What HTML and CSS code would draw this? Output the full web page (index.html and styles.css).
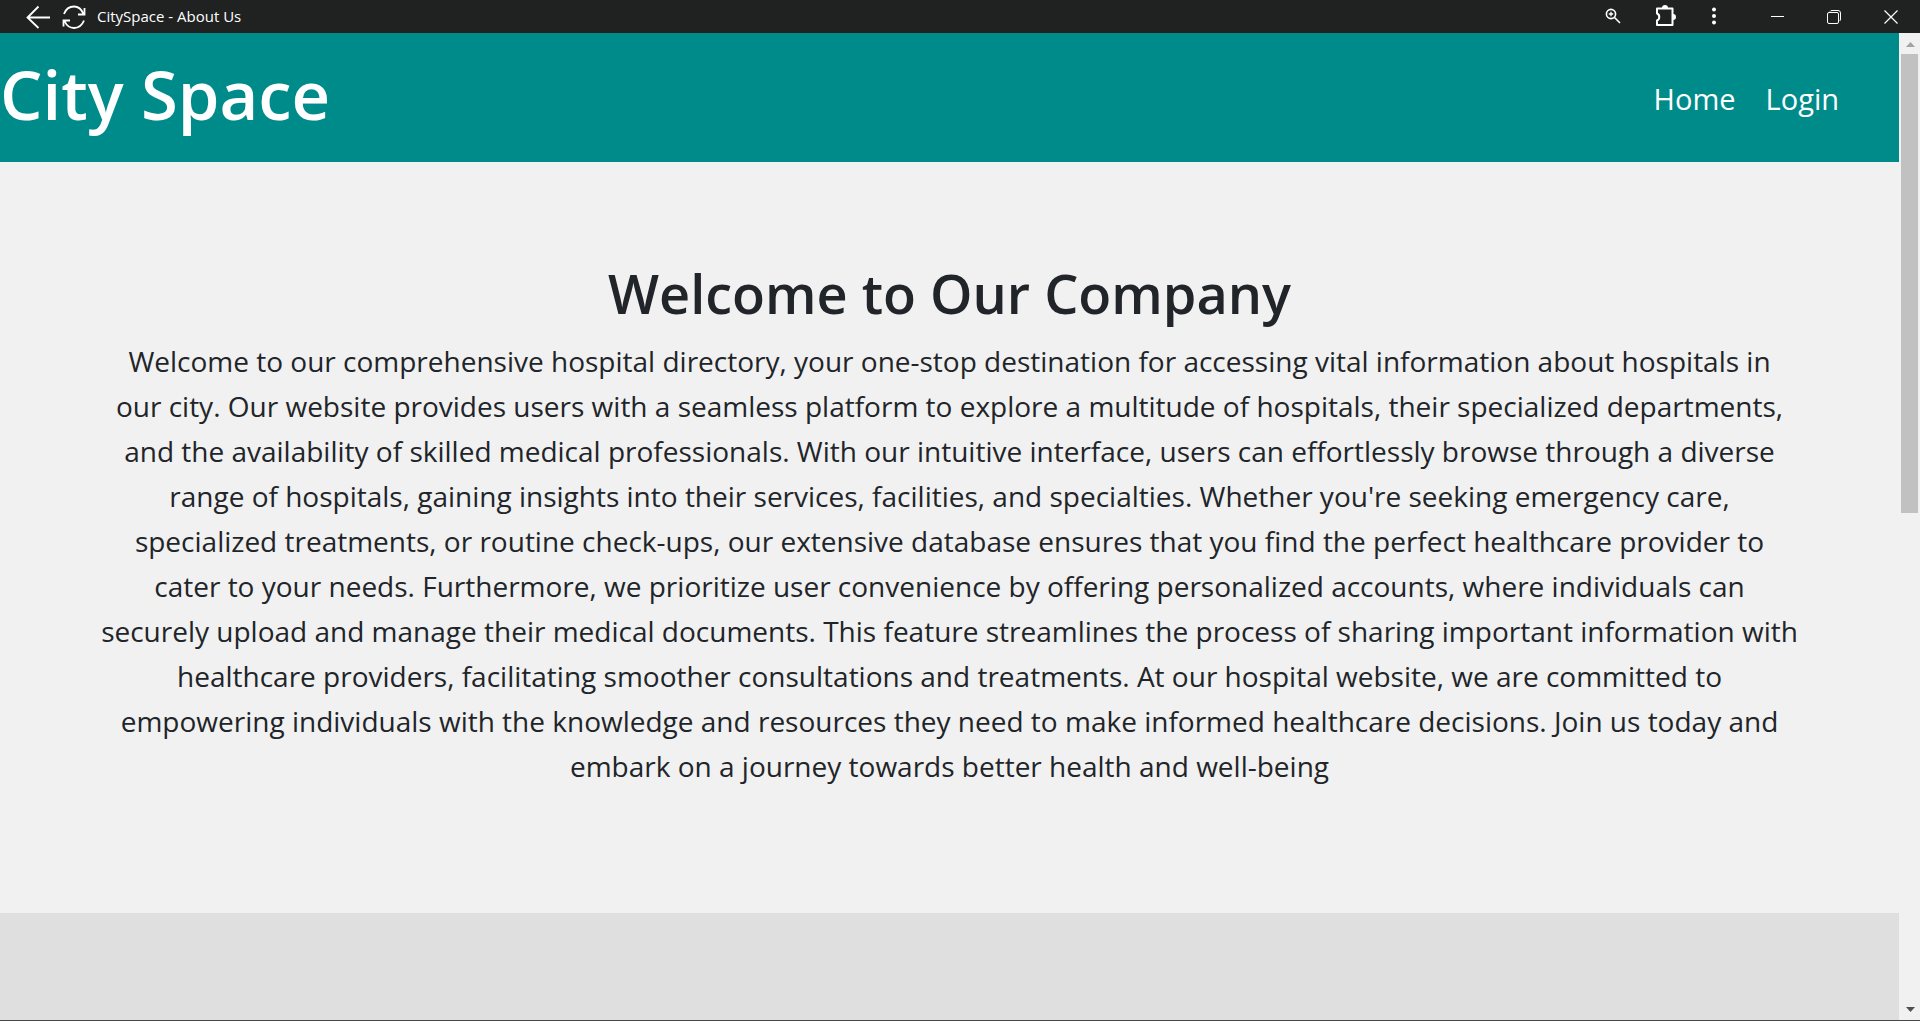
FILE: index.html
```html
<!DOCTYPE html>
<html lang="en">
<head>
<meta charset="utf-8">
<title>CitySpace - About Us</title>
<link rel="stylesheet" href="styles.css">
</head>
<body>
<div class="titlebar">
  <button class="tool back" aria-label="Back"><svg width="24" height="24" viewBox="0 0 24 24" fill="none" stroke="#fff" stroke-width="1.8"><path d="M12.500 1.500L1.500 12.500L12.500 23M1.500 12.500H24"/></svg></button>
  <button class="tool" aria-label="Reload"><svg width="24" height="24" viewBox="0 0 24 24" fill="none" stroke="#fff" stroke-width="1.800"><path d="M2 9C4 3.500 8 1.500 12 1.500C16 1.500 19.500 4 21.500 9M22.500 3V9.500H16M22 15.500C20 20.500 16 23 12 23C8 23 4.500 20.500 2.500 16M1.500 21.500V15.500H8"/></svg></button>
  <span class="app-name">CitySpace - About Us</span>
  <div class="tools">
    <button class="tool" aria-label="Zoom"><svg width="16" height="16" viewBox="0 0 16 16" fill="none" stroke="#fff" stroke-width="1.600"><circle cx="6" cy="6" r="4.600"/><path d="M9.500 9.500L15 15"/><path stroke-width="1.300" d="M6 3.800V8.200M3.800 6H8.200"/></svg></button>
    <button class="tool" aria-label="Extensions"><svg width="22" height="22" viewBox="0 0 22 22"><path fill="none" stroke="#fff" stroke-width="2" stroke-linejoin="round" d="M2 3.500H17.500V20H2V15.500C5 14.500 5 9.500 2 8.500Z"/><path fill="#fff" d="M7 3a3 3 0 0 1 6 0zM18 9a3 3 0 0 1 0 6z"/></svg></button>
    <button class="tool" aria-label="More"><svg width="6" height="18" viewBox="0 0 6 18" fill="#fff"><circle cx="3" cy="2.500" r="2"/><circle cx="3" cy="9" r="2"/><circle cx="3" cy="15.500" r="2"/></svg></button>
  </div>
  <div class="window-controls">
    <button class="tool" aria-label="Minimize"><svg width="13" height="14" viewBox="0 0 13 14"><path fill="#fff" d="M0 6h13v1H0z"/></svg></button>
    <button class="tool" aria-label="Restore"><svg width="14" height="14" viewBox="0 0 14 14" fill="none" stroke="#fff"><path d="M3 1.500Q3.500.500 5 .500H11Q13.500.500 13.500 3V9Q13.500 10.500 12.500 11"/><rect x=".5" y="2.500" width="11" height="11" rx="1.500"/></svg></button>
    <button class="tool" aria-label="Close"><svg width="14" height="14" viewBox="0 0 14 14" fill="none" stroke="#fff" stroke-width="1.200"><path d="M.5.500L13.500 13.500M13.500.500L.5 13.500"/></svg></button>
  </div>
</div>
<div class="viewport">
  <div class="page">
    <header class="site-header">
      <h1 class="brand">City Space</h1>
      <nav class="nav"><a href="#">Home</a><a href="#">Login</a></nav>
    </header>
    <main class="welcome">
      <h2 class="heading">Welcome to Our Company</h2>
      <p class="intro">Welcome to our comprehensive hospital directory, your one-stop destination for accessing vital information about hospitals in<br>
      our city. Our website provides users with a seamless platform to explore a multitude of hospitals, their specialized departments,<br>
      and the availability of skilled medical professionals. With our intuitive interface, users can effortlessly browse through a diverse<br>
      range of hospitals, gaining insights into their services, facilities, and specialties. Whether you're seeking emergency care,<br>
      specialized treatments, or routine check-ups, our extensive database ensures that you find the perfect healthcare provider to<br>
      cater to your needs. Furthermore, we prioritize user convenience by offering personalized accounts, where individuals can<br>
      securely upload and manage their medical documents. This feature streamlines the process of sharing important information with<br>
      healthcare providers, facilitating smoother consultations and treatments. At our hospital website, we are committed to<br>
      empowering individuals with the knowledge and resources they need to make informed healthcare decisions. Join us today and<br>
      embark on a journey towards better health and well-being</p>
    </main>
    <section class="next-section"></section>
  </div>
  <div class="scrollbar">
    <svg class="arrow" width="9" height="5" viewBox="0 0 9 5"><path fill="#a3a3a3" d="M0 5L4.500 0L9 5z"/></svg>
    <div class="track"><div class="thumb"></div></div>
    <svg class="arrow" width="9" height="5" viewBox="0 0 9 5"><path fill="#505050" d="M0 0L4.500 5L9 0z"/></svg>
  </div>
</div>
</body>
</html>
```
FILE: styles.css
```css
* { box-sizing: border-box; }

body {
  margin: 0;
  height: 100vh;
  display: flex;
  flex-direction: column;
  overflow: hidden;
  background: #f1f1f1;
  color: #212529;
  font-family: "Segoe UI", "Open Sans", "Noto Sans", sans-serif;
}

.titlebar {
  flex: none;
  display: flex;
  align-items: center;
  height: 33px;
  padding: 0 22px 0 26px;
  background: #202221;
  color: #fff;
}

.tool {
  display: flex;
  padding: 0;
  border: 0;
  background: none;
}

.back { margin-right: 12px; }

.app-name {
  margin-left: 11px;
  padding-bottom: 2px;
  font-size: 15px;
  line-height: 20px;
}

.tools,
.window-controls {
  display: flex;
  align-items: center;
}

.tools {
  gap: 34px;
  margin-left: auto;
  padding-bottom: 2px;
}

.window-controls {
  gap: 43px;
  margin-left: 54px;
}

.viewport {
  flex: 1;
  display: flex;
  min-height: 0;
  border-bottom: 1px solid #484848;
}

.page {
  flex: 1;
  display: flex;
  flex-direction: column;
  min-width: 0;
  overflow: hidden;
}

.site-header {
  flex: none;
  display: flex;
  align-items: center;
  justify-content: space-between;
  padding: 19px 60px 26px 0;
  background: #008b8b;
  color: #fff;
}

.brand {
  margin: 0;
  font-size: 67px;
  font-weight: 600;
  line-height: 84px;
}

.nav {
  display: flex;
  gap: 30px;
  padding-top: 8px;
  font-size: 29px;
  line-height: 45px;
}

.nav a {
  color: inherit;
  text-decoration: none;
}

.welcome {
  flex: none;
  padding: 96px 0 124px;
  text-align: center;
}

.heading {
  margin: 0 0 11px;
  font-size: 54px;
  font-weight: 600;
  line-height: 70px;
}

.intro {
  margin: 0;
  font-size: 28px;
  line-height: 45px;
  white-space: nowrap;
}

.next-section {
  flex: 1;
  background: #dfdfdf;
}

.scrollbar {
  flex: none;
  display: flex;
  flex-direction: column;
  align-items: center;
  gap: 7px;
  width: 21px;
  padding: 9px 1px 8px 2px;
}

.track {
  flex: 1;
  width: 100%;
}

.thumb {
  width: 17px;
  height: 48.5%;
  background: #c1c1c1;
}
```
